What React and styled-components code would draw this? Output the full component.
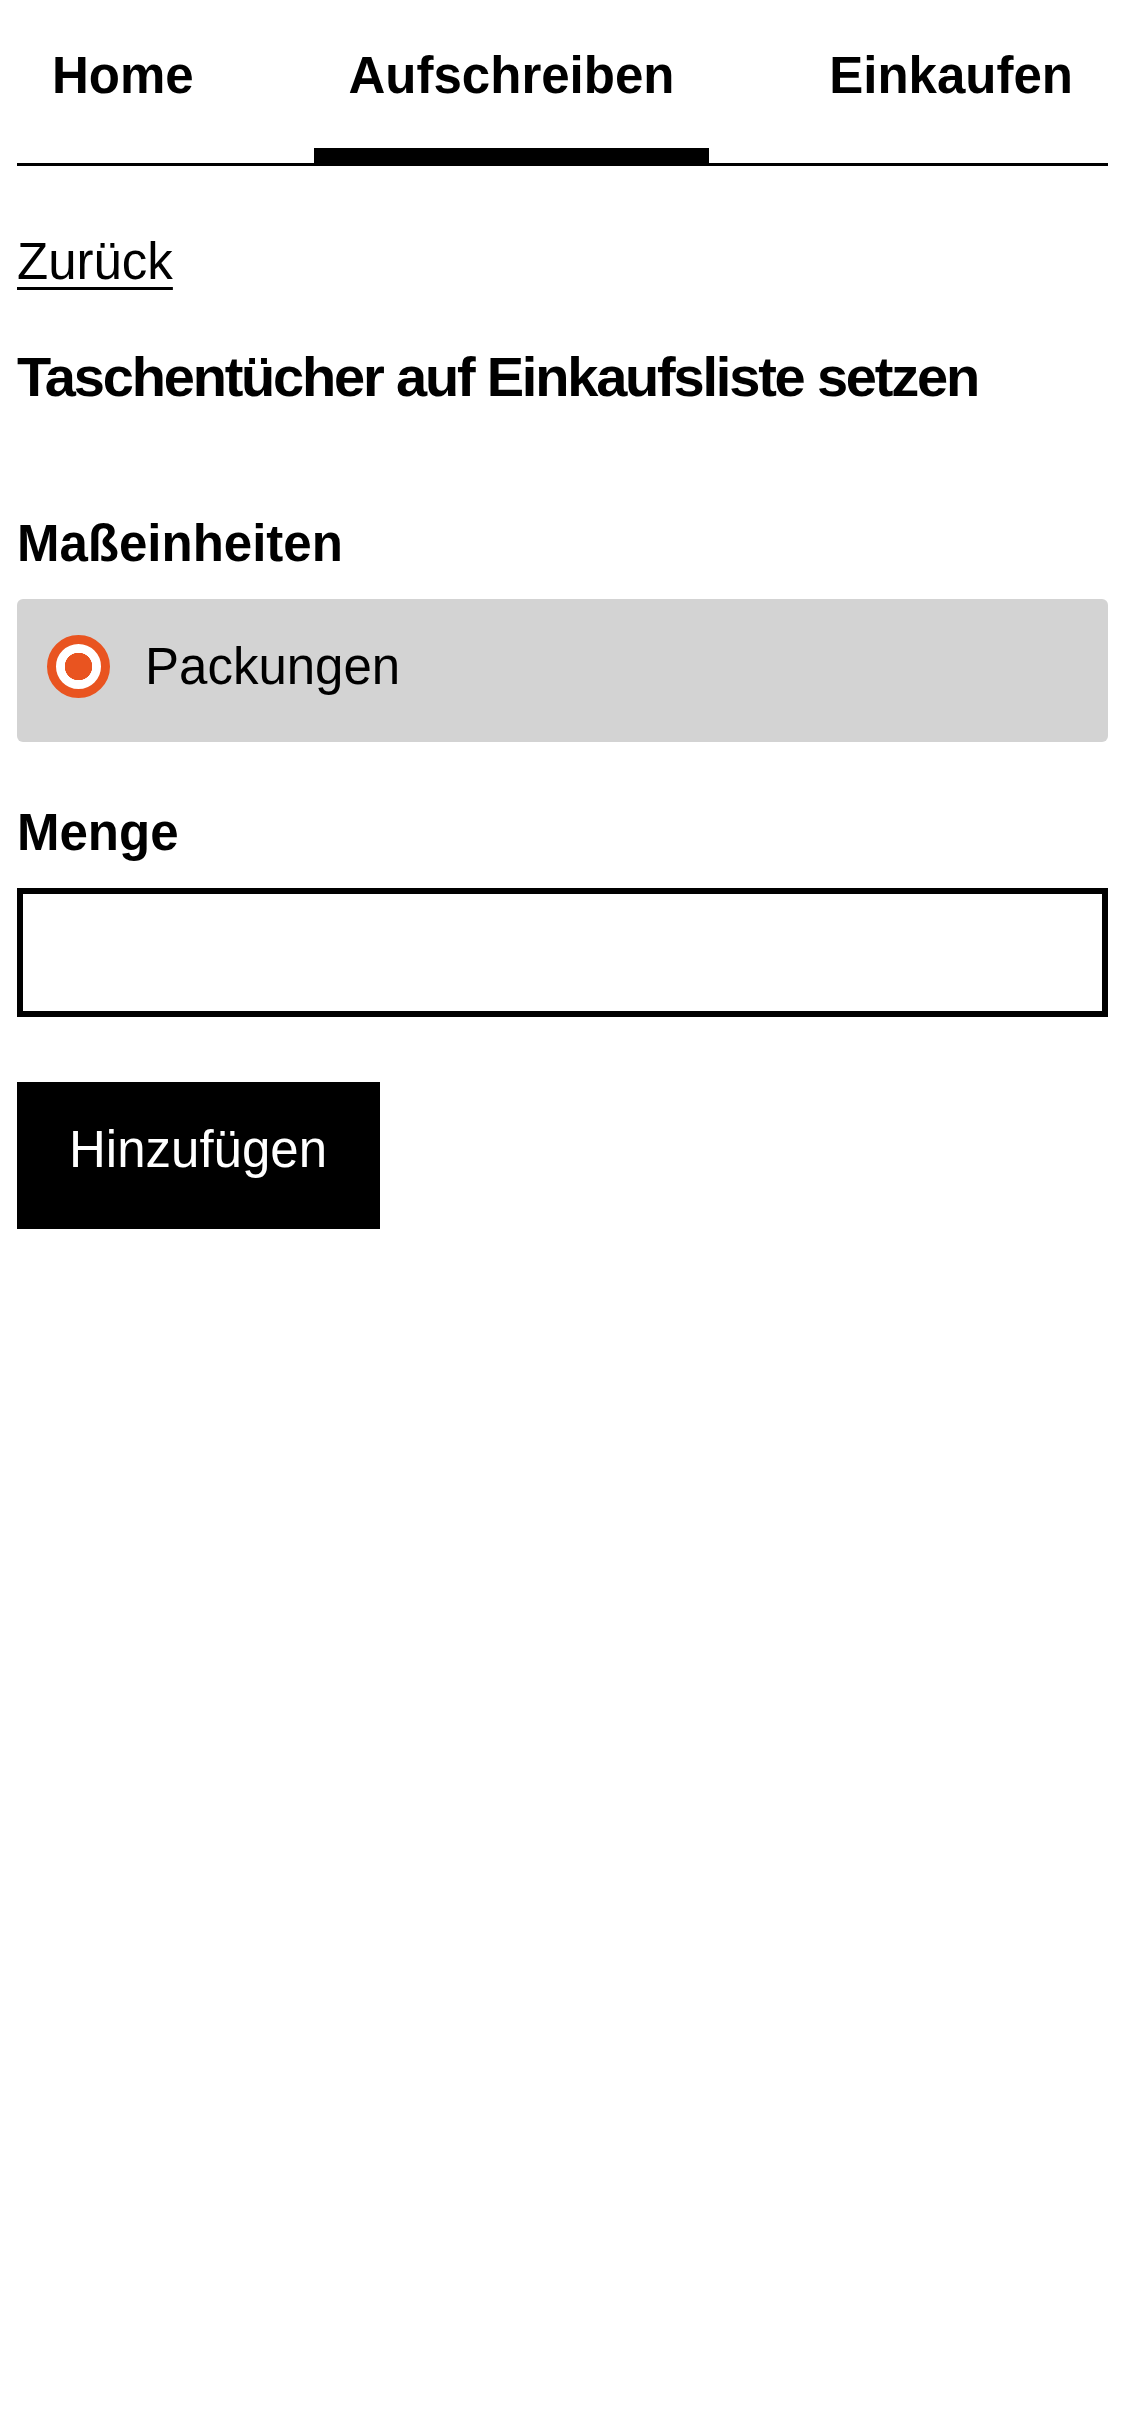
import React from "react";
import styled, { createGlobalStyle } from "styled-components";

const GlobalStyle = createGlobalStyle`
  html, body {
    margin: 0;
    padding: 0;
    background: #ffffff;
  }
  body {
    font-family: "Liberation Sans", Arial, Helvetica, sans-serif;
    color: #000000;
  }
  * { box-sizing: border-box; }
`;

const Page = styled.div`
  padding: 0 17px;
  display: flex;
  flex-direction: column;
`;

const TabBar = styled.nav`
  display: flex;
  justify-content: space-between;
  border-bottom: 3px solid #000;
`;

const Tab = styled.a`
  display: block;
  padding: 47px 35px 43px;
  font-size: 51px;
  line-height: 58px;
  font-weight: 700;
  color: #000;
  text-decoration: none;
  border-bottom: 15px solid ${(p) => (p.$active ? "#000" : "transparent")};
`;

const Content = styled.main`
  display: flex;
  flex-direction: column;
  align-items: flex-start;
`;

const BackLink = styled.a`
  margin-top: 67px;
  font-size: 51px;
  line-height: 58px;
  color: #000;
  text-decoration: underline;
  text-decoration-thickness: 3px;
  text-underline-offset: 8px;
`;

const Title = styled.h1`
  margin: 54px 0 0;
  font-size: 56px;
  line-height: 64px;
  font-weight: 700;
  letter-spacing: -2.2px;
`;

const FieldLabel = styled.div`
  margin-top: ${(p) => p.$top}px;
  font-size: 51px;
  line-height: 58px;
  font-weight: 700;
`;

const OptionBox = styled.label`
  align-self: stretch;
  margin-top: 26px;
  display: flex;
  align-items: center;
  gap: 35px;
  padding: 36px 30px 44px;
  background: #d3d3d3;
  border-radius: 6px;
  font-size: 51px;
  line-height: 58px;
`;

const Radio = styled.input.attrs({ type: "radio" })`
  appearance: none;
  -webkit-appearance: none;
  margin: 0;
  flex: none;
  width: 63px;
  height: 63px;
  border-radius: 50%;
  border: 9px solid #e95420;
  background: radial-gradient(circle, #e95420 0 13.5px, #ffffff 14px);
`;

const QuantityInput = styled.input`
  align-self: stretch;
  margin-top: 26px;
  height: 129px;
  border: 6px solid #000;
  border-radius: 0;
  background: #fff;
  font-size: 51px;
  font-family: inherit;
  padding: 0 16px;
  outline: none;
`;

const SubmitButton = styled.button`
  margin-top: 65px;
  padding: 39px 53px 50px 52px;
  background: #000;
  color: #fff;
  border: none;
  border-radius: 0;
  font-family: inherit;
  font-size: 51px;
  line-height: 58px;
`;

export default function App() {
  return (
    <>
      <GlobalStyle />
      <Page>
        <TabBar>
          <Tab href="#">Home</Tab>
          <Tab href="#" $active>
            Aufschreiben
          </Tab>
          <Tab href="#">Einkaufen</Tab>
        </TabBar>
        <Content>
          <BackLink href="#">Zurück</BackLink>
          <Title>Taschentücher auf Einkaufsliste setzen</Title>
          <FieldLabel $top={106}>Maßeinheiten</FieldLabel>
          <OptionBox>
            <Radio name="unit" defaultChecked readOnly />
            Packungen
          </OptionBox>
          <FieldLabel $top={62}>Menge</FieldLabel>
          <QuantityInput type="text" aria-label="Menge" />
          <SubmitButton type="button">Hinzufügen</SubmitButton>
        </Content>
      </Page>
    </>
  );
}
